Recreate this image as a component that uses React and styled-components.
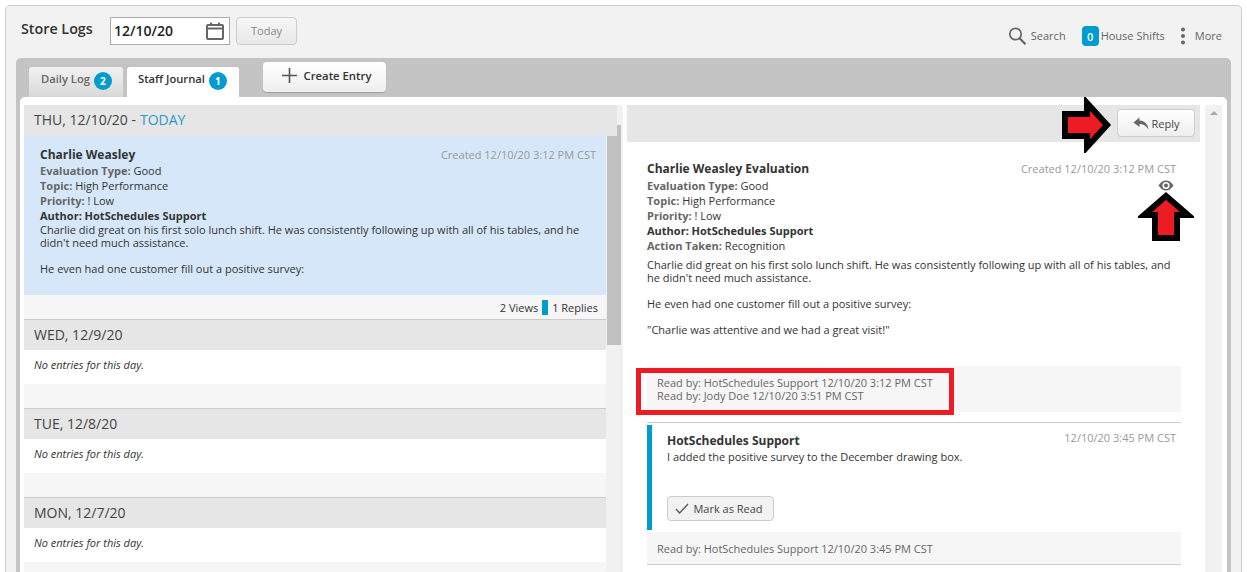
import styled, { createGlobalStyle } from 'styled-components'

const Global = createGlobalStyle`
html, body { margin: 0; padding: 0; background: #fff; overflow: hidden; }
body { font-family: 'Open Sans', sans-serif; font-size: 11px; line-height: 13px; color: #333; }
* { box-sizing: border-box; }
`

const Page = styled.div`
position: relative;
width: 1247px;
height: 572px;
padding: 5px 5px 0 5px;
overflow: hidden;
`
const Shell = styled.div`
height: 580px;
background: #f2f2f2;
border: 1px solid #ccc;
border-radius: 5px;
padding: 0 10px;
`
const Header = styled.header`
display: flex;
align-items: flex-start;
height: 52px;
`
const Title = styled.h1`
margin: 14px 16px 0 5px;
font-size: 14.3px;
line-height: 18px;
font-weight: 600;
color: #333;
width: 73px;
white-space: nowrap;
`
const DateBox = styled.div`
display: flex;
align-items: center;
justify-content: space-between;
width: 120px;
height: 28px;
margin-top: 11px;
padding: 0 4px 1px 3px;
background: #fff;
border: 1px solid #aaa;
font-size: 14px;
font-weight: 600;
color: #222;
`
const Button = styled.button`
display: inline-flex;
align-items: center;
justify-content: center;
gap: ${p => p.$gap || 6}px;
font-family: inherit;
font-size: 11px;
color: #444;
padding: 0;
border: 1px solid #ccc;
border-radius: 4px;
background: linear-gradient(#fff, #eee);
`
const TodayButton = styled(Button)`
width: 61px;
height: 28px;
margin: 11px 0 0 6px;
padding-bottom: 2px;
color: #888;
background: linear-gradient(#f6f6f6, #e9e9e9);
`
const Tools = styled.div`
margin-left: auto;
display: flex;
align-items: center;
height: 20px;
margin-top: 20px;
padding-right: 9px;
color: #666;
`
const Tool = styled.div`
display: flex;
align-items: center;
gap: ${p => p.$gap || 4}px;
margin-left: ${p => p.$left || 0}px;
white-space: nowrap;
`
const ToolLabel = styled.span`
margin-top: -1px;
`
const CountBox = styled.span`
display: flex;
align-items: center;
justify-content: center;
width: 17px;
height: 20px;
background: #009ccf;
border-radius: 4px;
color: #fff;
font-weight: 600;
`
const Board = styled.div`
height: 520px;
background: #c4c4c4;
border-radius: 5px 5px 0 0;
padding: 0 4px;
`
const TabRow = styled.div`
display: flex;
align-items: flex-start;
height: 39px;
padding-left: 9px;
`
const Tab = styled.div`
display: flex;
align-items: flex-start;
gap: 4px;
height: 30px;
margin-top: 9px;
margin-right: 4px;
padding: 5px 0 0 ${p => (p.$active ? 11 : 12)}px;
width: ${p => (p.$active ? 112 : 94)}px;
border-radius: 3px 3px 0 0;
font-size: 11.2px;
font-weight: 600;
background: ${p => (p.$active ? '#fff' : 'linear-gradient(#f2f2f2, #d8d8d8)')};
color: ${p => (p.$active ? '#333' : '#666')};
white-space: nowrap;
`
const Count = styled.span`
display: flex;
align-items: center;
justify-content: center;
width: 18px;
height: 18px;
border-radius: 50%;
background: #009ccf;
color: #fff;
font-size: 10px;
font-weight: 700;
`
const CreateButton = styled(Button)`
width: 123px;
height: 30px;
margin: 4px 0 0 20px;
padding: 0 0 3px 4px;
border: none;
font-size: 11.3px;
font-weight: 600;
color: #333;
gap: 7px;
box-shadow: 0 1px 1px rgba(0,0,0,.2);
`
const Sheet = styled.div`
display: flex;
height: 480px;
background: #fff;
border-radius: 5px 5px 0 0;
padding: 8px 4px 0 4px;
`
const ListColumn = styled.div`
width: 582px;
flex: none;
`
const Track = styled.div`
position: relative;
width: 17px;
flex: none;
background: #f1f1f1;
margin-left: ${p => p.$left || 0}px;
`
const Thumb = styled.div`
position: absolute;
left: 1px;
right: 2px;
top: 20px;
height: 220px;
background: #c0c0c0;
`
const UpArrow = styled.div`
position: absolute;
left: 5px;
top: 6px;
width: 0;
height: 0;
border-left: 4px solid transparent;
border-right: 4px solid transparent;
border-bottom: 4px solid #aaa;
`
const DayHead = styled.div`
display: flex;
align-items: center;
height: 30px;
padding: 0 0 2px 10px;
background: #e6e6e6;
font-size: 14px;
color: #444;
`
// the sticky heading of the list runs over the top of its scrollbar
const StickyHead = styled(DayHead)`
position: relative;
z-index: 1;
height: 31px;
margin-right: -11px;
`
const TodayLabel = styled.span`
color: #2a9ac8;
margin-left: 4px;
`
const Entry = styled.div`
height: 159px;
padding: 11px 8px 0 16px;
background: #d6e7f9;
color: #333;
`
const EntryTop = styled.div`
display: flex;
justify-content: space-between;
align-items: center;
height: 15px;
margin-bottom: 1px;
padding-right: 2px;
`
const EntryName = styled.div`
font-size: 12px;
font-weight: 700;
color: #333;
`
const Stamp = styled.div`
color: #999;
margin-top: ${p => p.$up ? -3 : 0}px;
`
const Field = styled.div`
height: 15px;
line-height: 15px;
`
const FieldKey = styled.b`
font-weight: 700;
color: ${p => p.$dark ? '#333' : '#666'};
`
const Paragraph = styled.p`
margin: ${p => p.$top || 0}px 0 0;
width: ${p => p.$width || 560}px;
`
const Foot = styled.div`
display: flex;
justify-content: flex-end;
align-items: center;
gap: 4px;
padding-right: 8px;
background: #f6f6f6;
border-bottom: 1px solid #ccc;
height: 25px;
`
const FootBar = styled.span`
width: 6px;
height: 15px;
background: #009ccf;
`
const Empty = styled.div`
height: 34px;
padding: 8px 10px;
font-style: italic;
background: #fff;
`
const Spacer = styled.div`
height: 25px;
background: #f6f6f6;
border-bottom: 1px solid #ccc;
`
const DetailColumn = styled.div`
width: 573px;
flex: none;
margin-left: 4px;
`
const DetailHead = styled.div`
display: flex;
justify-content: flex-end;
align-items: flex-start;
height: 37px;
padding: 4px 5px 0 0;
background: #e6e6e6;
`
const ReplyButton = styled(Button)`
width: 78px;
height: 28px;
gap: 3px;
`
const DetailBody = styled.div`
position: relative;
height: 224px;
padding: 19px 24px 0 20px;
color: #333;
`
const DetailTop = styled.div`
display: flex;
justify-content: space-between;
align-items: center;
height: 15px;
margin-bottom: 2px;
`
const EyeMark = styled.div`
position: absolute;
right: 26px;
top: 38px;
line-height: 0;
`
const ReadBox = styled.div`
margin: 0 19px 0 20px;
padding: ${p => p.$single ? '10px' : '10px 10px 9px'};
height: ${p => p.$single ? 33 : 46}px;
background: #f6f6f6;
color: #666;
border-bottom: ${p => p.$single ? '1px solid #ccc' : 'none'};
`
const Reply = styled.div`
margin: 10px 19px 0 20px;
padding-top: 2px;
border-top: 1px solid #ccc;
`
const ReplyInner = styled.div`
height: 105px;
padding: 9px 5px 0 15px;
border-left: 5px solid #009ccf;
margin-bottom: 2px;
`
const ReplyTop = styled.div`
display: flex;
justify-content: space-between;
height: 15px;
margin-bottom: 1px;
`
const ReplyName = styled.div`
font-size: 12px;
font-weight: 700;
`
const MarkButton = styled(Button)`
width: 107px;
height: 25px;
margin-top: 33px;
padding-right: 3px;
background: #f2f2f2;
gap: 4px;
`
const ArrowMark = styled.div`
position: absolute;
left: ${p => p.$x}px;
top: ${p => p.$y}px;
`
const RedFrame = styled.div`
position: absolute;
left: 636px;
top: 368px;
width: 318px;
height: 47px;
border: 5px solid #ed1c24;
`

function CalendarIcon() {
  return (
    <svg width="20" height="20" viewBox="0 0 20 20" fill="none" stroke="#666" strokeWidth="2">
      <rect x="2" y="4" width="16" height="14" rx="1" />
      <path d="M2 7.5h16" strokeWidth="2" />
      <path d="M6 1.5v3M14 1.5v3" strokeWidth="2" />
    </svg>
  )
}
function SearchIcon() {
  return (
    <svg width="19" height="20" viewBox="0 0 19 20" fill="none" stroke="#666">
      <circle cx="7.5" cy="8" r="5.7" strokeWidth="1.7" />
      <path d="M11.6 12.3L17.5 18.3" strokeWidth="2.2" />
    </svg>
  )
}
function MoreIcon() {
  return (
    <svg width="6" height="18" viewBox="0 0 6 18" fill="#666">
      <circle cx="3" cy="2.5" r="2" />
      <circle cx="3" cy="9" r="2" />
      <circle cx="3" cy="15.5" r="2" />
    </svg>
  )
}
function PlusIcon() {
  return (
    <svg width="15" height="15" viewBox="0 0 15 15" stroke="#555" strokeWidth="1.6">
      <path d="M7.5 0v15M0 7.5h15" />
    </svg>
  )
}
function ReplyIcon() {
  return (
    <svg width="16" height="13" viewBox="0 0 16 13" fill="#666">
      <path d="M6.5 0.5L0.5 5.5L6.5 10V7C10 7 13 8.5 15.5 12.5C15 7.5 11.5 3.8 6.5 3.6Z" />
    </svg>
  )
}
function EyeIcon() {
  return (
    <svg width="16" height="11" viewBox="0 0 16 11">
      <path d="M0.5 5.5C3 1.8 5.4 0.5 8 0.5S13 1.8 15.5 5.5C13 9.2 10.6 10.5 8 10.5S3 9.2 0.5 5.5Z" fill="#666" />
      <circle cx="8" cy="5.5" r="3.6" fill="#fff" />
      <circle cx="8" cy="5.5" r="2" fill="#666" />
    </svg>
  )
}
function CheckIcon() {
  return (
    <svg width="14" height="11" viewBox="0 0 14 11" fill="none" stroke="#555" strokeWidth="1.3">
      <path d="M1 6l3.6 4L13 1" />
    </svg>
  )
}
function RightArrow() {
  return (
    <svg width="50" height="56" viewBox="0 0 50 56" style={{ display: 'block' }}>
      <path d="M3 17H25V6L45 28L25 50V39H3Z" fill="#ed1c24" stroke="#000" strokeWidth="6" />
    </svg>
  )
}
function UpMark() {
  return (
    <svg width="56" height="50" viewBox="0 0 56 50" style={{ display: 'block' }}>
      <path d="M6 23L28 4L50 23H39V46H17V23Z" fill="#ed1c24" stroke="#000" strokeWidth="6" />
    </svg>
  )
}

const days = ['WED, 12/9/20', 'TUE, 12/8/20', 'MON, 12/7/20']

export default function App() {
  return (
    <Page>
      <Global />
      <Shell>
        <Header>
          <Title>Store Logs</Title>
          <DateBox>12/10/20<CalendarIcon /></DateBox>
          <TodayButton>Today</TodayButton>
          <Tools>
            <Tool><SearchIcon /><ToolLabel>Search</ToolLabel></Tool>
            <Tool $left={16} $gap={2}><CountBox>0</CountBox><ToolLabel>House Shifts</ToolLabel></Tool>
            <Tool $left={15} $gap={9}><MoreIcon /><ToolLabel>More</ToolLabel></Tool>
          </Tools>
        </Header>
        <Board>
          <TabRow>
            <Tab>Daily Log <Count>2</Count></Tab>
            <Tab $active>Staff Journal <Count>1</Count></Tab>
            <CreateButton><PlusIcon />Create Entry</CreateButton>
          </TabRow>
          <Sheet>
            <ListColumn>
              <StickyHead>THU, 12/10/20 - <TodayLabel>TODAY</TodayLabel></StickyHead>
              <Entry>
                <EntryTop>
                  <EntryName>Charlie Weasley</EntryName>
                  <Stamp>Created 12/10/20 3:12 PM CST</Stamp>
                </EntryTop>
                <Field><FieldKey>Evaluation Type:</FieldKey> Good</Field>
                <Field><FieldKey>Topic:</FieldKey> High Performance</Field>
                <Field><FieldKey>Priority:</FieldKey> ! Low</Field>
                <Field><FieldKey $dark>Author: HotSchedules Support</FieldKey></Field>
                <Paragraph>Charlie did great on his first solo lunch shift. He was consistently following up with all of his tables, and he didn't need much assistance.</Paragraph>
                <Paragraph $top={13}>He even had one customer fill out a positive survey:</Paragraph>
              </Entry>
              <Foot>2 Views <FootBar /> 1 Replies</Foot>
              {days.map(day => (
                <div key={day}>
                  <DayHead>{day}</DayHead>
                  <Empty>No entries for this day.</Empty>
                  <Spacer />
                </div>
              ))}
            </ListColumn>
            <Track>
              <Thumb />
            </Track>
            <DetailColumn>
              <DetailHead>
                <ReplyButton><ReplyIcon />Reply</ReplyButton>
              </DetailHead>
              <DetailBody>
                <DetailTop>
                  <EntryName>Charlie Weasley Evaluation</EntryName>
                  <Stamp>Created 12/10/20 3:12 PM CST</Stamp>
                </DetailTop>
                <EyeMark><EyeIcon /></EyeMark>
                <Field><FieldKey>Evaluation Type:</FieldKey> Good</Field>
                <Field><FieldKey>Topic:</FieldKey> High Performance</Field>
                <Field><FieldKey>Priority:</FieldKey> ! Low</Field>
                <Field><FieldKey $dark>Author: HotSchedules Support</FieldKey></Field>
                <Field><FieldKey>Action Taken:</FieldKey> Recognition</Field>
                <Paragraph $top={5} $width={530}>Charlie did great on his first solo lunch shift. He was consistently following up with all of his tables, and he didn't need much assistance.</Paragraph>
                <Paragraph $top={13}>He even had one customer fill out a positive survey:</Paragraph>
                <Paragraph $top={13}>"Charlie was attentive and we had a great visit!"</Paragraph>
              </DetailBody>
              <ReadBox>
                Read by: HotSchedules Support 12/10/20 3:12 PM CST<br />
                Read by: Jody Doe 12/10/20 3:51 PM CST
              </ReadBox>
              <Reply>
                <ReplyInner>
                  <ReplyTop>
                    <ReplyName>HotSchedules Support</ReplyName>
                    <Stamp $up>12/10/20 3:45 PM CST</Stamp>
                  </ReplyTop>
                  I added the positive survey to the December drawing box.
                  <div><MarkButton><CheckIcon />Mark as Read</MarkButton></div>
                </ReplyInner>
              </Reply>
              <ReadBox $single>Read by: HotSchedules Support 12/10/20 3:45 PM CST</ReadBox>
            </DetailColumn>
            <Track $left={5}><UpArrow /></Track>
          </Sheet>
        </Board>
      </Shell>
      <ArrowMark $x={1062} $y={97}><RightArrow /></ArrowMark>
      <ArrowMark $x={1138} $y={192}><UpMark /></ArrowMark>
      <RedFrame />
    </Page>
  )
}
